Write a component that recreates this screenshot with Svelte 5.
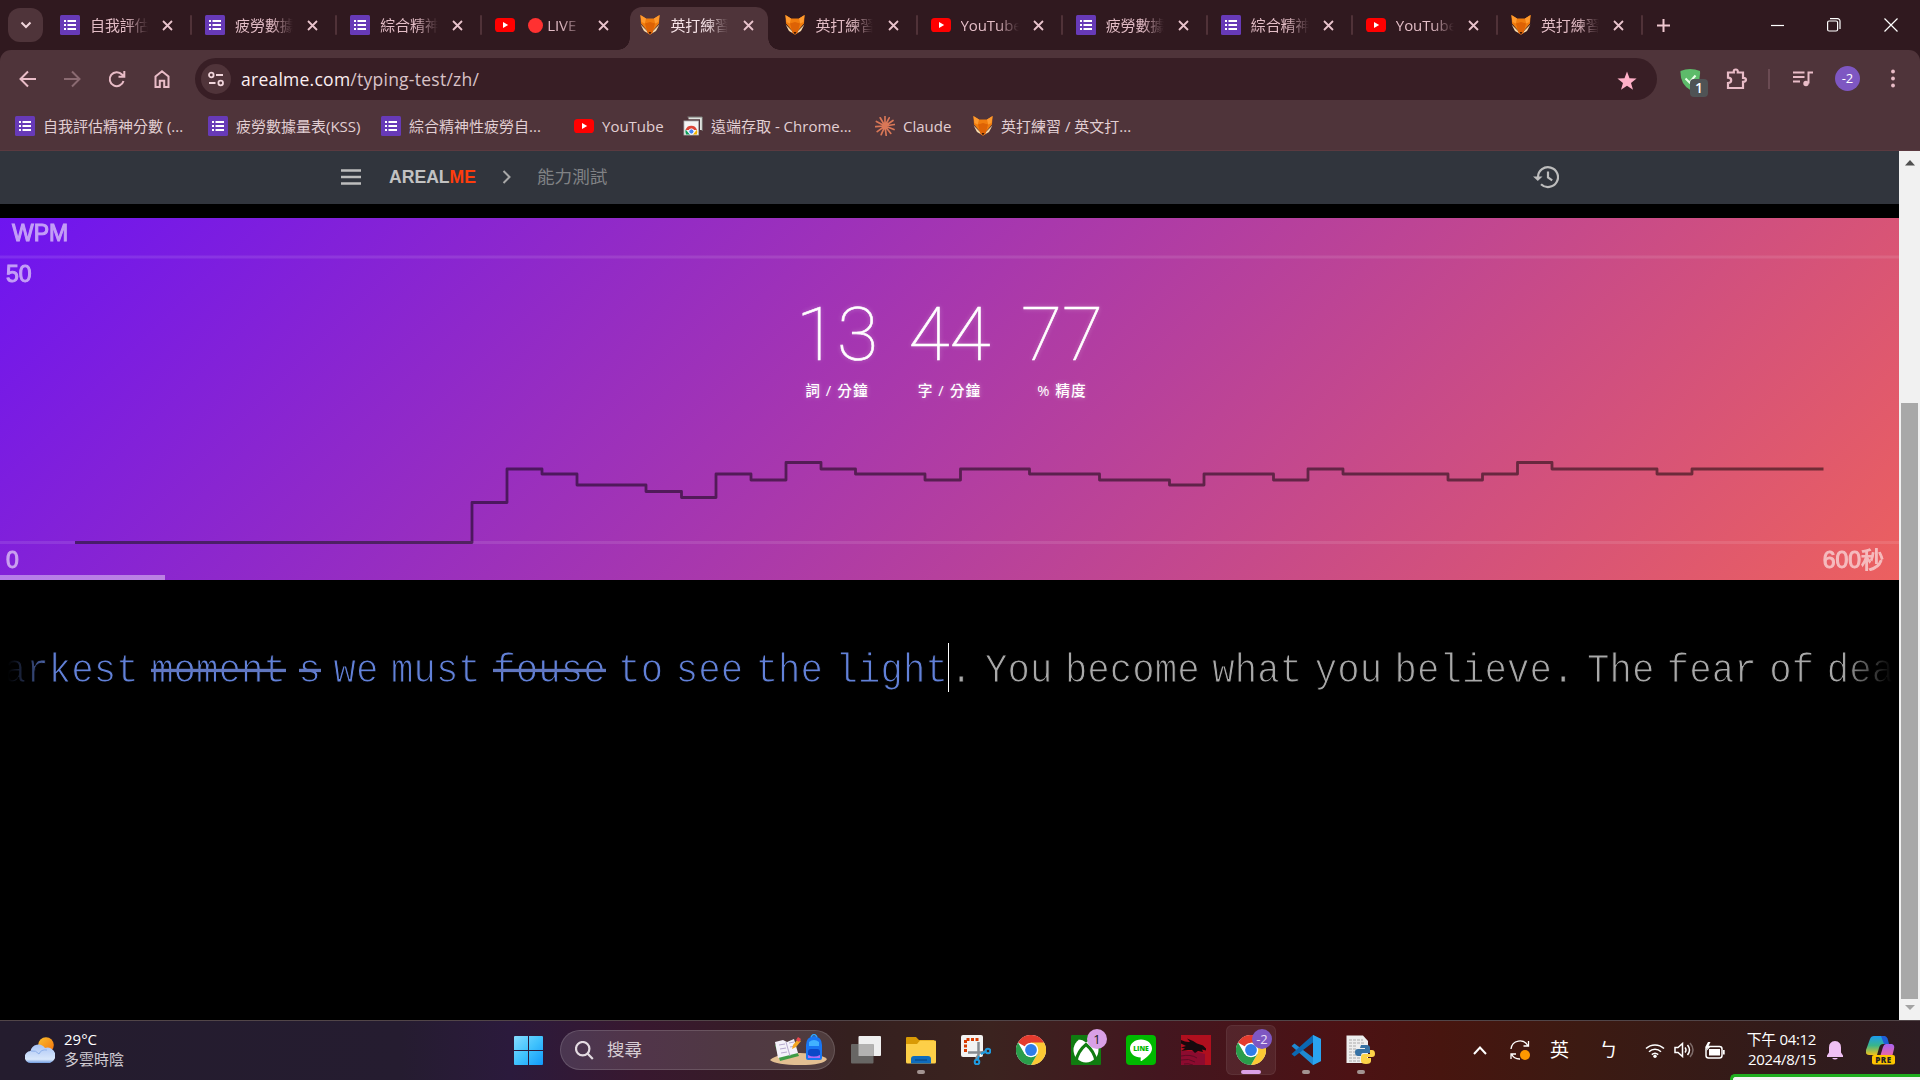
<script>
  const tabs = [
    { icon: 'form', title: '自我評估精神分數' },
    { icon: 'form', title: '疲勞數據量表' },
    { icon: 'form', title: '綜合精神性疲勞' },
    { icon: 'yt', title: 'LIVE', live: true, plain: true },
    { icon: 'fox', title: '英打練習 / 英文', active: true, plain: true },
    { icon: 'fox', title: '英打練習 / 英文' },
    { icon: 'yt', title: 'YouTube' },
    { icon: 'form', title: '疲勞數據量表' },
    { icon: 'form', title: '綜合精神性疲勞' },
    { icon: 'yt', title: 'YouTube' },
    { icon: 'fox', title: '英打練習 / 英文' }
  ];

  const bookmarks = [
    { icon: 'form', title: '自我評估精神分數 (...', width: 193 },
    { icon: 'form', title: '疲勞數據量表(KSS)', width: 173 },
    { icon: 'form', title: '綜合精神性疲勞自...', width: 193 },
    { icon: 'yt', title: 'YouTube', width: 109 },
    { icon: 'remote', title: '遠端存取 - Chrome...', width: 192 },
    { icon: 'claude', title: 'Claude', width: 98 },
    { icon: 'fox', title: '英打練習 / 英文打...', width: 170 }
  ];

  const stats = [
    { value: '13', label: '詞 / 分鐘' },
    { value: '44', label: '字 / 分鐘' },
    { value: '77', label: '% 精度' }
  ];

  // [x where the level begins, y of the level]
  const levels = [
    [75, 324.5], [472, 284.5], [507, 251], [542, 256], [577, 267], [646, 273.5], [681.5, 279.5],
    [716, 256], [751, 262], [786, 244.5], [821, 251], [855.5, 256], [925, 262], [960.5, 251],
    [1029.5, 256], [1099.5, 262], [1169.5, 267], [1204, 256], [1273.5, 262], [1308, 251],
    [1343, 256], [1448, 262], [1482.5, 256], [1517.5, 244.5], [1552, 251], [1657, 256], [1692, 251]
  ];
  const line =
    'M' + levels.map(([x, y], i) => (i ? `H${x}V${y}` : `${x} ${y}`)).join('') + 'H1823.5';

  const typed = [
    { text: 'darkest' }, { text: 'moment', wrong: true }, { text: 's', wrong: true }, { text: 'we' },
    { text: 'must' }, { text: 'fouse', wrong: true }, { text: 'to' }, { text: 'see' },
    { text: 'the' }, { text: 'light' }
  ];
  const upcoming = ['.', 'You', 'become', 'what', 'you', 'believe.', 'The', 'fear', 'of', 'death'];

  const apps = [
    { icon: 'taskview' }, { icon: 'folder', dot: true }, { icon: 'snip' }, { icon: 'chrome' },
    { icon: 'xbox', badge: '1' }, { icon: 'line' }, { icon: 'dragon' },
    { icon: 'chrome', badge: '-2', current: true }, { icon: 'vscode', dot: true },
    { icon: 'python', dot: true }
  ];
</script>

{#snippet favicon(kind)}
  <svg class="fav" viewBox="0 0 20 20">
    {#if kind === 'form'}
      <rect width="20" height="20" rx="1.5" fill="#673ab7" />
      <path d="M4 5h2v2H4zM4 9h2v2H4zM4 13h2v2H4zM7.5 5H16v2H7.5zM7.5 9H16v2H7.5zM7.5 13H16v2H7.5z" fill="#fff" />
    {:else if kind === 'yt'}
      <rect y="3" width="20" height="14" rx="3.6" fill="#f00" />
      <path d="M8 7l5.2 3L8 13z" fill="#fff" />
    {:else if kind === 'fox'}
      <path d="M.4 0 6 3.6h8L19.6 0 19 8.5 10 19 1 8.5z" fill="#f07c0e" />
      <path d="M.6 9.5 10 19 19.4 9.5 16 16 10 19.6 4 16z" fill="#f9d9a8" />
      <path d="M5 8.5 10 7l5 1.5L12.5 18 10 19.8 7.5 18z" fill="#dd6205" />
      <path d="M.4 0 6 3.6 4.8 8.5 1.5 7zM19.6 0 14 3.6l1.2 4.9L18.5 7z" fill="#ff9a2e" />
      <path d="M8.6 17h2.8L10 19.6z" fill="#3a1a08" />
    {:else if kind === 'remote'}
      <path d="M5.5 2.2H18V14" fill="none" stroke="#dfe3e0" stroke-width="2" />
      <path d="M4.5 1H19.2V15" fill="none" stroke="#8d9791" stroke-width=".8" />
      <rect x="1" y="5" width="14.5" height="14" fill="#f4f4f4" stroke="#b4b4b4" stroke-width=".8" />
      <path d="M2.5 14a6 6 0 0 1 11.5 0z" fill="#db4437" />
      <path d="M2.5 13.5 7 18.6H3Q2 16 2.5 13.5z" fill="#0f9d58" />
      <path d="M14 13.5 10 18.6h3.8Q14.8 16 14 13.5z" fill="#f4b400" />
      <circle cx="8.4" cy="15.5" r="2.6" fill="#4285f4" stroke="#fff" />
    {:else}
      <path d="M10 10V.6M10 10 14.2 1.8M10 10 18 4.5M10 10 19.4 8.5M10 10 19 13.5M10 10 15.8 17.4M10 10 11.2 19.5M10 10 6.2 18.6M10 10 2.2 15.6M10 10 .6 10.6M10 10 1.4 5.4M10 10 5.2 1.8" stroke="#d97757" stroke-width="1.7" stroke-linecap="round" />
    {/if}
  </svg>
{/snippet}

{#snippet chromeLogo()}
  <circle cx="15" cy="15" r="15" fill="#fff" />
  <path d="M15 15 2 7.5A15 15 0 0 1 28 7.5z" fill="#e33b2e" />
  <path d="M15 7.5H28A15 15 0 0 1 15 30L21.5 18.7z" fill="#fcc934" />
  <path d="M2 7.5A15 15 0 0 0 15 30L21.5 18.7 15 22 8.5 18.7z" fill="#2a9d4a" />
  <circle cx="15" cy="15" r="7.3" fill="#fff" />
  <circle cx="15" cy="15" r="5.9" fill="#2f7de9" />
{/snippet}

<div class="screen">
  <div class="tabstrip">
    <div class="tabsearch"><svg width="12" height="8" viewBox="0 0 12 8"><path d="M1.5 1.5 6 6l4.5-4.5" /></svg></div>
    <div class="tabs">
      {#each tabs as tab}
        <div class={['tab', tab.active && 'active', tab.plain && 'plain']}>
          {@render favicon(tab.icon)}
          <span class="title">{#if tab.live}<i></i>{/if}{tab.title}</span>
          <svg class="x" width="11" height="11" viewBox="0 0 11 11"><path d="m1 1 9 9M10 1l-9 9" /></svg>
        </div>
      {/each}
    </div>
    <svg class="plus" width="13" height="13" viewBox="0 0 13 13"><path d="M6.5 0v13M0 6.5h13" /></svg>
    <div class="winctl">
      <svg width="14" height="14" viewBox="0 0 14 14"><path d="M0 7.5h13" /></svg>
      <svg width="14" height="14" viewBox="0 0 14 14"><rect x=".6" y="3" width="10" height="10" rx="1.5" /><path d="M3 .7h7.5a2.5 2.5 0 0 1 2.5 2.5V11" /></svg>
      <svg width="14" height="14" viewBox="0 0 14 14"><path d="m.5.5 13 13M13.5.5l-13 13" /></svg>
    </div>
  </div>

  <div class="toolbar">
    <div class="nav">
      <svg viewBox="0 0 20 20"><path d="M18 10H3M10 2.5 2.5 10l7.5 7.5" /></svg>
      <svg class="dim" viewBox="0 0 20 20"><path d="M2 10h15M10 2.5 17.5 10 10 17.5" /></svg>
      <svg viewBox="0 0 20 20"><path d="M16.5 12a7 7 0 1 1-1.5-6.5L17 7.5M17.3 2v5.8h-5.8" /></svg>
      <svg viewBox="0 0 20 20"><path d="M3.5 18V7.5L10 2.3l6.5 5.2V18h-4.3v-6.2H7.8V18z" /></svg>
    </div>
    <div class="omnibox">
      <div class="site"><svg width="16" height="16" viewBox="0 0 16 16"><circle cx="3.3" cy="4" r="2.3" /><path d="M8 4h7M1 12h6.5" /><circle cx="12.7" cy="12" r="2.3" /></svg></div>
      <span class="url"><b>arealme.com</b>/typing-test/zh/</span>
      <svg class="star" width="20" height="20" viewBox="0 0 20 20"><path d="m10 .5 2.5 6.7 7.1.3-5.6 4.4 2 6.9-6-4-6 4 2-6.9L.4 7.5l7.1-.3z" /></svg>
    </div>
    <div class="ext">
      <svg width="21" height="21" viewBox="0 0 21 21"><path d="M.5 2Q10-2 20 2q1 13-9.7 19Q0 15 .5 2z" fill="#5dbb6a" /><path d="m5.5 9.5 4 4 6-7" fill="none" stroke="#e8ffe8" stroke-width="2" /></svg>
      <span>1</span>
    </div>
    <svg class="puzzle" width="22" height="22" viewBox="0 0 22 22"><path d="M2 4.5h5.8C7.5 2 8.5 1.5 9.8 1.5s2.2.7 2 3H17v5.3c2 0 3 .8 3 2s-1 2-3 2V20H2v-5c2.5 0 3.2-1.2 3.2-2.7S4.5 9.7 2 9.7z" /></svg>
    <i class="sep"></i>
    <svg class="music" width="20" height="16" viewBox="0 0 20 16"><path d="M0 1.5h11.5M0 6h11.5M0 10.5h7M15.5 12.5V1.5H20" /><circle cx="13" cy="12.5" r="2.7" /></svg>
    <span class="avatar">-2</span>
    <svg class="dots" width="4" height="20" viewBox="0 0 4 20"><circle cx="2" cy="2.5" r="1.9" /><circle cx="2" cy="9.5" r="1.9" /><circle cx="2" cy="16.5" r="1.9" /></svg>
  </div>

  <div class="bookmarks">
    {#each bookmarks as b}
      <div class="bookmark" style:width="{b.width}px">{@render favicon(b.icon)}<span>{b.title}</span></div>
    {/each}
  </div>

  <div class="view">
    <main>
      <header>
        <svg class="burger" width="20" height="16" viewBox="0 0 20 16"><path d="M0 1.5h20M0 8h20M0 14.5h20" /></svg>
        <span class="brand">AREAL<em>ME</em></span>
        <svg class="chev" width="9" height="14" viewBox="0 0 9 14"><path d="m1.5 1 6 6-6 6" /></svg>
        <span class="crumb">能力測試</span>
        <svg class="history" width="26" height="24" viewBox="0 0 26 24"><path d="M5 12a10 9.9 0 1 1 3 7.2" /><path d="M15 6.5v6l4.2 2.8" /><path class="fill" d="M0 11.5h9.5L4.8 16z" /></svg>
      </header>

      <section class="chart">
        <svg class="plot" width="1899" height="362" viewBox="0 0 1899 362">
          <path class="grid" d="M0 39H1899M0 324.5H1899" />
          <path class="wpm" d={line} />
        </svg>
        <div class="labels"><span class="unit">WPM</span><span class="max">50</span></div>
        <div class="stats">
          {#each stats as s}
            <div class="stat"><strong>{s.value}</strong><span>{s.label}</span></div>
          {/each}
        </div>
        <div class="axis"><span>0</span><span>600秒</span></div>
        <div class="progress"></div>
      </section>

      <section class="typing">
        <div class="done"><p>{#each typed as w, i}{i ? ' ' : ''}<span class={[w.wrong && 'wrong']}>{w.text}</span>{/each}</p></div>
        <i class="caret"></i>
        <div class="next"><p>{upcoming.join(' ')}</p></div>
      </section>
    </main>
    <div class="scroll">
      <svg width="10" height="6" viewBox="0 0 10 6"><path d="M5 0l5 5.5H0z" fill="#505050" /></svg>
      <div class="thumb"></div>
      <svg width="10" height="6" viewBox="0 0 10 6"><path d="M0 0h10L5 5z" fill="#a3a3a3" /></svg>
    </div>
  </div>

  <footer>
    <svg class="weather" width="30" height="28" viewBox="0 0 30 28">
      <defs>
        <linearGradient id="cloud" x1="0" y1="0" x2="0" y2="1"><stop offset="0" stop-color="#a9c4f5" /><stop offset=".8" stop-color="#d9e7fb" /><stop offset="1" stop-color="#6f9be0" /></linearGradient>
        <linearGradient id="sun" x1="0" y1="0" x2="1" y2="1"><stop offset="0" stop-color="#fbc02d" /><stop offset="1" stop-color="#f4700b" /></linearGradient>
      </defs>
      <circle cx="21" cy="9" r="7.8" fill="url(#sun)" />
      <path d="M6 27a6 6 0 0 1-.5-12A8 8 0 0 1 20 12a7.5 7.5 0 0 1 5 15z" fill="url(#cloud)" />
      <path d="M6 15q5-1 8 3 2-5 8-4" fill="none" stroke="#8eb0ea" />
    </svg>
    <div class="forecast"><span>29°C</span><span>多雲時陰</span></div>

    <svg class="start" width="29" height="29" viewBox="0 0 29 29">
      <defs><linearGradient id="win" x1="0" y1="0" x2="1" y2="1"><stop offset="0" stop-color="#86dcff" /><stop offset=".5" stop-color="#40c2fd" /><stop offset="1" stop-color="#1199fa" /></linearGradient></defs>
      <path d="M1 0h13v14H0V1a1 1 0 0 1 1-1zM15 0h13a1 1 0 0 1 1 1v13H15zM0 15h14v14H1a1 1 0 0 1-1-1zM15 15h14v13a1 1 0 0 1-1 1H15z" fill="url(#win)" />
    </svg>

    <div class="search">
      <svg width="19" height="19" viewBox="0 0 19 19"><circle cx="7.7" cy="7.7" r="6.7" /><path d="m12.5 12.5 5.3 5.5" /></svg>
      <span>搜尋</span>
      <svg class="art" width="57" height="32" viewBox="0 0 57 32">
        <path d="M0 26Q8 19 30 19q20 0 27 6-3 6-27 6T0 26z" fill="#e3bf92" />
        <path d="m5 11 17-4 7 15-19 5z" fill="#3f9c46" />
        <path d="m5 8 8-2 4 2 7-3 4 14-8 2-4 1-8 2z" fill="#f4f1fa" />
        <path d="m9 11 6-1M10 15l6-1M11 19l6-1M19 9l5-1M20 13l5-1M16 8l4 14" fill="none" stroke="#b6a9cf" />
        <path d="m22 15 1-4 5-6 3 2-5 6z" fill="#f5a623" />
        <path d="m26 6 2-3 3 2-2 3z" fill="#e5484d" />
        <path d="M36 11Q36 3 44 2q8 1 8 9v13q0 2-2 2H38q-2 0-2-2z" fill="#1976f2" />
        <path d="M41 3q3-5 6 0" fill="none" stroke="#2ea3ff" stroke-width="1.5" />
        <path d="M39 8q5-4 10 0v4H39z" fill="#41b2ff" />
        <rect x="38" y="15" width="12" height="8" rx="3" fill="#0c48c8" />
        <path d="M38 21q6 3 12 0v3H38z" fill="#b16cf4" />
      </svg>
    </div>

    <div class="apps">
      {#each apps as app}
        <div class={['app', app.current && 'current']}>
          <svg width="30" height="30" viewBox="0 0 30 30">
            {#if app.icon === 'taskview'}
              <rect x="7.5" y="1" width="22.5" height="20" rx="1" fill="#efefef" />
              <rect y="9" width="22.5" height="19.5" rx="1" fill="#686664" />
              <path d="M7.5 9h15v12h-15z" fill="#b3b2b1" />
            {:else if app.icon === 'folder'}
              <path d="M0 3q0-1 1-1h9l3 3h15v8H0z" fill="#d99a05" />
              <path d="M0 9h11l3-3.5h15q1 0 1 1V27q0 1.5-1.5 1.5h-27Q0 28.5 0 27z" fill="#fdcf48" />
              <path d="M5 28.5V24q0-3 3-3h14q3 0 3 3v4.5z" fill="#0f6cbd" />
              <path d="M9 25h12" stroke="#06407c" />
            {:else if app.icon === 'snip'}
              <rect width="22" height="22" rx="2" fill="#f3f3f3" />
              <path d="M4.5 17V4.5H18" fill="none" stroke="#d83b01" stroke-width="3" stroke-dasharray="3 1.5" />
              <path d="M17.5 7v13L15 24M7 17.5h13l5-1" fill="none" stroke="#868b90" stroke-width="2.5" />
              <g fill="none" stroke="#1e9be0" stroke-width="2"><circle cx="16" cy="27" r="2.3" /><circle cx="27" cy="16" r="2.3" /><path d="m20 19 4-2M18 21l-1 3" /></g>
            {:else if app.icon === 'chrome'}
              {@render chromeLogo()}
            {:else if app.icon === 'xbox'}
              <rect width="30" height="30" rx="1" fill="#107c10" />
              <circle cx="15" cy="15" r="12.5" fill="#fff" />
              <path d="M7 4.5q4-.5 8 3 4-3.5 8-3-3.5-3-8-3T7 4.5z" fill="#107c10" />
              <path d="M5 26Q7 16 15 9.5 23 16 25 26" fill="none" stroke="#107c10" stroke-width="3" />
            {:else if app.icon === 'line'}
              <rect width="30" height="30" rx="4" fill="#00b900" />
              <path d="M15 4.5c6.3 0 11 3.9 11 9 0 4.5-4.5 8.5-10.5 12.5-1 .5-1-.5-.7-3.5C8.5 22.5 4 18.5 4 13.5s4.7-9 11-9z" fill="#fff" />
              <text x="15" y="16.3" text-anchor="middle">LINE</text>
            {:else if app.icon === 'dragon'}
              <path d="M0 0h30v30H0z" fill="#b00f1e" />
              <path d="M0 16h12l12 3v11H0z" fill="#8c0b2f" />
              <path d="M0 5q5 2.500 9 2L6 3.500q6 2 10 5l6 2 3 3v2l-4-1 1 2.500-5-1-3 2-3-3H7l-7 1 4-2.500-4-1 5-1.500-5-2.500z" fill="#16090d" />
              <path d="M0 21q10-2 16 2M0 25q8-2 14 2M3 29q4-1 9 1" fill="none" stroke="#5d0a24" />
            {:else if app.icon === 'vscode'}
              <path d="M22 0 30 4v22l-8 4L.5 11 3.5 8.500 22 22.500z" fill="#1f8ad2" />
              <path d="M22 0v7.500L3.500 21.500.5 19z" fill="#0b68b2" />
              <path d="M22 0 30 4v22l-8 4z" fill="#2aa4f0" />
            {:else}
              <path d="M.5.5H17L22 6v22H.5z" fill="#eee" />
              <path d="M3 5h14M3 8h16M3 11h8M3 14h7M3 17h7M3 20h8M3 23h11M3 26h15" stroke="#aaa" stroke-dasharray="3 1" />
              <path d="M15 10h6q3 0 3 3v5h-7q-2 0-2 3h-3q-3 0-3-4 0-3 3-3h7v-1h-5z" fill="#3672a4" />
              <path d="M24 15h2q3 0 3 4 0 3-3 3h-5v1h4v3q0 3-5 3t-5-3v-4q0-3 3-3h6z" fill="#fdd348" />
            {/if}
          </svg>
          {#if app.badge}<span class={['badge', app.current && 'profile']}>{app.badge}</span>{/if}
          {#if app.dot}<i class="run"></i>{/if}
          {#if app.current}<i class="run wide"></i>{/if}
        </div>
      {/each}
    </div>

    <div class="tray">
      <svg class="up" width="14" height="9" viewBox="0 0 14 9"><path d="m1 8 6-6.5L13 8" /></svg>
      <svg class="sync" width="20" height="20" viewBox="0 0 20 20"><path d="M1 9a9 9 0 0 1 17-3M18.5 1v5h-5M1 19v-5h5M1.5 14A9 9 0 0 0 10 19" /><circle cx="15" cy="15" r="5" /></svg>
      <span class="ime">英</span>
      <span class="ime bopo">ㄅ</span>
      <svg class="wifi" width="20" height="15" viewBox="0 0 20 15"><path d="M1 5.5a13 13 0 0 1 18 0M4 8.7a8.7 8.7 0 0 1 12 0M6.8 11.6a4.8 4.8 0 0 1 6.4 0" /><circle cx="10" cy="13.3" r="1.7" /></svg>
      <svg class="vol" width="20" height="16" viewBox="0 0 20 16"><path d="M1 5.5h3L8.5 1.5v13L4 10.5H1zM11 5.5q2 2.5 0 5M13.5 3q4 5 0 10" /><path class="faint" d="M16 1q6 7 0 14" /></svg>
      <svg class="batt" width="20" height="17" viewBox="0 0 20 17"><rect x="1" y="4.5" width="16" height="11.5" rx="2.5" /><path d="M4 7h11v6.5H4zM18 8h1.7v4.5H18zM3 0 0 5.5h2.5L1.5 9 6 4H3.5L5.5 0z" class="fill" /></svg>
      <div class="clock"><span>下午 04:12</span><span>2024/8/15</span></div>
      <svg class="bell" width="16" height="19" viewBox="0 0 16 19"><path d="M8 0q6 .5 6 6.5v5l2 3V16H0v-1.5l2-3v-5Q2 .5 8 0zM5 17h6q-3 3-6 0z" /></svg>
      <svg class="copilot" width="30" height="29" viewBox="0 0 30 29">
        <defs>
          <linearGradient id="cpa" x1="0" y1="0" x2="0" y2="1"><stop offset="0" stop-color="#1b9cf0" /><stop offset=".5" stop-color="#39b58a" /><stop offset="1" stop-color="#f1c21b" /></linearGradient>
          <linearGradient id="cpb" x1="0" y1="0" x2="0" y2="1"><stop offset="0" stop-color="#a763f2" /><stop offset="1" stop-color="#f4679b" /></linearGradient>
        </defs>
        <path d="M8 0h9q3 0 4 4l1 4h-5q-3 0-4 4l-2 7H3q-4 0-3-5L4 3Q5 0 8 0z" fill="url(#cpa)" />
        <path d="M15 0h3q3 0 4 4l1 4h-5z" fill="#1f5fd8" />
        <path d="M20 8h6q3 1 2 5l-2 8H14l3-10q1-3 3-3z" fill="url(#cpb)" />
        <rect x="6" y="19" width="23" height="9.5" rx="2" fill="#fdc500" />
        <text x="17.5" y="27" text-anchor="middle">PRE</text>
      </svg>
    </div>
    <div class="toast"></div>
  </footer>
</div>

<style>
  :global(body) { background: #000; overflow: hidden; }
  * { box-sizing: border-box; }
  svg { flex: none; display: block; }
  .screen {
    width: 1920px; height: 1080px; display: flex; flex-direction: column; overflow: hidden; position: relative;
    font: 15px/20px "Open Sans", "Noto Sans CJK TC", sans-serif; color: #e3bdc6; background: #30191f;
  }
  .fav { width: 20px; height: 20px; }

  .tabstrip { height: 50px; flex: none; display: flex; align-items: center; padding-left: 8px; }
  .tabsearch { width: 35px; height: 34px; border-radius: 12px; background: #4f343a; display: grid; place-items: center; margin-right: 4px; }
  .tabsearch svg, .x, .plus { fill: none; stroke: #f0d5db; stroke-width: 2; }
  .tabs { display: flex; height: 50px; }
  .tab { width: 145.1px; height: 50px; padding: 0 0 0 13px; display: flex; align-items: center; position: relative; }
  .tab:not(.plain)::after { content: ''; position: absolute; right: 0; top: 15px; width: 2px; height: 20px; background: #503238; border-radius: 1px; }
  .title { width: 58px; flex: none; margin: 0 14.3px 0 10px; white-space: nowrap; overflow: hidden; letter-spacing: -.1px; -webkit-mask: linear-gradient(90deg, #000 62%, transparent 100%); mask: linear-gradient(90deg, #000 62%, transparent 100%); }
  .title i { display: inline-block; width: 15px; height: 15px; border-radius: 50%; background: #ff3131; margin: 0 4px 0 3px; vertical-align: -2px; }
  .x { stroke: #e9c3cc; stroke-width: 1.8; }
  .active { color: #f6e3e7; isolation: isolate; }
  .active::before {
    content: ''; position: absolute; z-index: -1; left: -9px; right: -8px; top: 7px; bottom: 0;
    background:
      radial-gradient(circle at 0 0, transparent 11.5px, #4f343a 12px) 0 100% / 12px 12px no-repeat,
      radial-gradient(circle at 100% 0, transparent 11.5px, #4f343a 12px) 100% 100% / 12px 12px no-repeat;
  }
  .tab.active::after { content: ''; position: absolute; z-index: -1; left: 3px; right: 4px; top: 7px; bottom: 0; background: #4f343a; border-radius: 12px 12px 0 0; }
  .plus { margin-left: 14px; stroke: #efc8d0; }
  .winctl { margin-left: auto; display: flex; gap: 42.5px; padding-right: 22.5px; }
  .winctl svg { fill: none; stroke: #fff; stroke-width: 1.2; }

  .toolbar { height: 58px; flex: none; background: #4f343a; border-radius: 11px 11px 0 0; display: flex; align-items: center; }
  .nav { display: flex; gap: 24.7px; margin-left: 17.5px; width: 177.5px; flex: none; }
  .nav svg { width: 20px; height: 20px; fill: none; stroke: #e9bcc7; stroke-width: 2; }
  .nav .dim { stroke: #8a6a71; }
  .omnibox { width: 1462px; flex: none; height: 42px; border-radius: 21px; background: #381e25; display: flex; align-items: center; padding: 0 20px 0 6px; }
  .site { width: 30px; height: 30px; border-radius: 50%; background: #50343a; display: grid; place-items: center; }
  .site svg { fill: none; stroke: #f0d5db; stroke-width: 1.8; }
  .url { margin-left: 10px; font-size: 17.5px; line-height: 24px; letter-spacing: .25px; color: #d9c3c8; flex: 1; }
  .url b { font-weight: 400; color: #fbeef1; }
  .star { fill: #ffb0c8; margin-top: 3px; }
  .ext { position: relative; margin-left: 23px; width: 45.5px; flex: none; }
  .ext span { position: absolute; left: 10px; top: 10px; width: 18px; height: 18px; border-radius: 4px; background: #4f5355; color: #fff; font: 600 14px/18px "Open Sans", sans-serif; text-align: center; }
  .puzzle { fill: none; stroke: #e9bcc7; stroke-width: 2.2; }
  .sep { width: 2px; height: 20px; background: #6b4b53; margin: 0 23px 0 20px; }
  .music { fill: #e9bcc7; }
  .music path { fill: none; stroke: #e9bcc7; stroke-width: 2; }
  .avatar { width: 25px; height: 25px; border-radius: 50%; background: #7e57c2; color: #fff; font-size: 13px; line-height: 25px; text-align: center; margin: -2px 31px 0 22.5px; flex: none; }
  .dots { fill: #e9bcc7; }

  .bookmarks { height: 43px; flex: none; background: #4f343a; display: flex; align-items: center; padding: 0 0 7px 15px; border-bottom: 1px solid #5b3a40; color: #e2cfd3; }
  .bookmark { display: flex; gap: 8px; white-space: nowrap; letter-spacing: 0; }

  .view { height: 869px; flex: none; display: flex; background: #000; }
  main { width: 1899px; }
  header { height: 53px; background: #31353d; display: flex; align-items: center; padding: 0 340px 2px 341px; font-size: 17.6px; }
  .burger { stroke: #bdbdbd; stroke-width: 2.5; }
  .brand { margin-left: 28px; font: 700 17.6px/20px "Liberation Sans", Arial, sans-serif; color: #c2c2c2; }
  .brand em { font-style: normal; color: #ff3c0c; }
  .chev { margin: 0 26px 0 26px; fill: none; stroke: #a8a8a8; stroke-width: 2; }
  .crumb { flex: 1; margin-top: -1px; color: #808285; }
  .history { fill: none; stroke: #bdbdbd; stroke-width: 2.2; }
  .history .fill { fill: #bdbdbd; stroke: none; }

  .chart { margin-top: 14px; height: 362px; display: flex; flex-direction: column; position: relative; background: linear-gradient(135deg, #6e15f0, #ec605f); }
  .plot { position: absolute; left: 0; top: 0; fill: none; }
  .grid { stroke: rgba(255, 255, 255, .1); stroke-width: 3; }
  .wpm { stroke: rgba(0, 0, 0, .5); stroke-width: 2.8; stroke-linejoin: round; }
  .labels, .axis { font: 400 23px/26px "Liberation Sans", "Noto Sans CJK TC", sans-serif; color: #fff; opacity: .58; -webkit-text-stroke: 1px #fff; position: relative; }
  .labels { display: flex; flex-direction: column; height: 80px; padding-top: 2px; }
  .unit { padding-left: 12px; height: 41px; }
  .max { padding-left: 6px; }
  .stats { display: flex; justify-content: center; position: relative; color: #fff; }
  .stat { width: 112.5px; display: flex; flex-direction: column; align-items: center; text-shadow: 0 0 5px rgba(255, 255, 255, .35); }
  .stat strong { font: 100 75px/72px Roboto, sans-serif; margin-bottom: 10px; -webkit-text-stroke: .6px #fff; }
  .stat span { font: 500 14.7px/20px "Open Sans", "Noto Sans CJK TC", sans-serif; letter-spacing: 1.1px; }
  .axis { display: flex; justify-content: space-between; padding: 0 15px 0 6px; margin-top: auto; margin-bottom: 2px; }
  .progress { width: 165px; height: 5px; background: rgba(255, 255, 255, .42); }

  .typing {
    height: 84px; margin-top: 45px; display: flex; align-items: center; overflow: hidden; white-space: nowrap;
    font: 37.3px/48px "Liberation Mono", monospace; letter-spacing: .1px; word-spacing: -10px;
    -webkit-mask: linear-gradient(90deg, transparent 8px, #000 56px, #000 1842px, transparent 1892px);
    mask: linear-gradient(90deg, transparent 8px, #000 56px, #000 1842px, transparent 1892px);
  }
  .typing p { margin: 10px 0 0; white-space: pre; transform: scaleY(1.1); transform-origin: 0 34px; -webkit-text-stroke: 1px #000; }
  .done { width: 948px; flex: none; display: flex; justify-content: flex-end; color: #6281d8; }
  .wrong { position: relative; }
  .wrong::after { content: ''; position: absolute; left: 0; right: 0; top: 19px; height: 3px; background: #6076bf; }
  .caret { width: 1px; height: 49px; flex: none; background: #fff; }
  .next { padding-left: 1px; color: #a8a8a8; }

  .scroll { width: 21px; background: #f1f1f1; display: flex; flex-direction: column; align-items: center; padding: 9px 0; }
  .thumb { width: 17px; height: 596px; margin: auto 0 6px; background: #a8a8a8; }

  footer {
    height: 60px; flex: none; display: flex; align-items: center; padding-bottom: 1px; border-top: 1px solid #514548; position: relative; color: #fff;
    background: linear-gradient(90deg, #241c2e 0, #251c30 400px, #2b1a3c 510px, #38182f 640px, #35201f 850px, #3b231f 990px, #43161f 1160px, #4c1214 1350px, #47150f 1440px, #3c1a12 1580px, #321b1a 1780px, #2d1c22 1920px);
  }
  .weather { margin-left: 25px; }
  .forecast { margin: -3px 0 0 9px; width: 450px; display: flex; flex-direction: column; }
  .forecast span + span { color: #cfcbd2; }
  .search { margin-left: 17px; width: 275px; height: 40px; border-radius: 20px; border: 1px solid rgba(255, 255, 255, .14); background: rgba(255, 255, 255, .13); display: flex; align-items: center; padding: 0 7px 0 14px; }
  .search > svg:first-child { fill: none; stroke: #e4dce2; stroke-width: 2.2; }
  .search span { flex: 1; margin: -2px 0 0 13px; font-size: 17.5px; color: #d6ccd3; }
  .apps { display: flex; margin-left: 6px; gap: 5px; }
  .app { width: 50px; height: 50px; display: grid; place-items: center; position: relative; border-radius: 6px; }
  .current { background: rgba(255, 255, 255, .07); border: 1px solid rgba(255, 255, 255, .06); }
  .badge { position: absolute; left: 26px; top: 4px; width: 20px; height: 20px; border-radius: 50%; background: #d9a0e6; color: #222; font-size: 13px; line-height: 20px; text-align: center; }
  .profile { left: 25px; top: 3px; background: #7e57c2; color: #e8ddf7; }
  .run { position: absolute; bottom: 1px; left: 21px; width: 8px; height: 4px; border-radius: 2px; background: #a39492; }
  .wide { width: 20px; left: 14px; bottom: 0; background: #dba0e6; }
  .app text { font: 800 6.8px "Open Sans", sans-serif; fill: #00b900; }
  .tray { margin-left: auto; display: flex; align-items: center; padding-right: 24px; }
  .tray svg { fill: none; stroke: #fff; stroke-width: 1.5; }
  .tray .up { stroke-width: 2; margin-right: 23px; }
  .tray .sync { stroke-width: 1.3; margin-right: 20px; }
  .tray .sync circle { fill: #ff9800; stroke: none; }
  .ime { font-size: 19px; width: 19px; margin-right: 30px; }
  .tray .bopo { margin-right: 27px; }
  .tray .wifi { margin-right: 9px; }
  .tray .wifi circle, .tray .batt .fill { fill: #fff; stroke: none; }
  .tray .vol { margin-right: 11px; }
  .faint { opacity: .35; }
  .clock { margin-top: -3px; width: 91px; display: flex; flex-direction: column; align-items: flex-end; letter-spacing: -.35px; white-space: nowrap; }
  .tray .bell { fill: #f0c0f4; stroke: none; margin: 0 23px 0 11px; }
  .tray .copilot { stroke: none; }
  .copilot text { font: 800 8px "Open Sans", sans-serif; fill: #222; letter-spacing: .5px; }
  .toast { position: absolute; left: 1730px; right: 0; bottom: 0; height: 6px; border: 3px solid #1fae1f; border-width: 3px 0 0 3px; border-radius: 5px 0 0 0; background: #f4f4f4; }
</style>
